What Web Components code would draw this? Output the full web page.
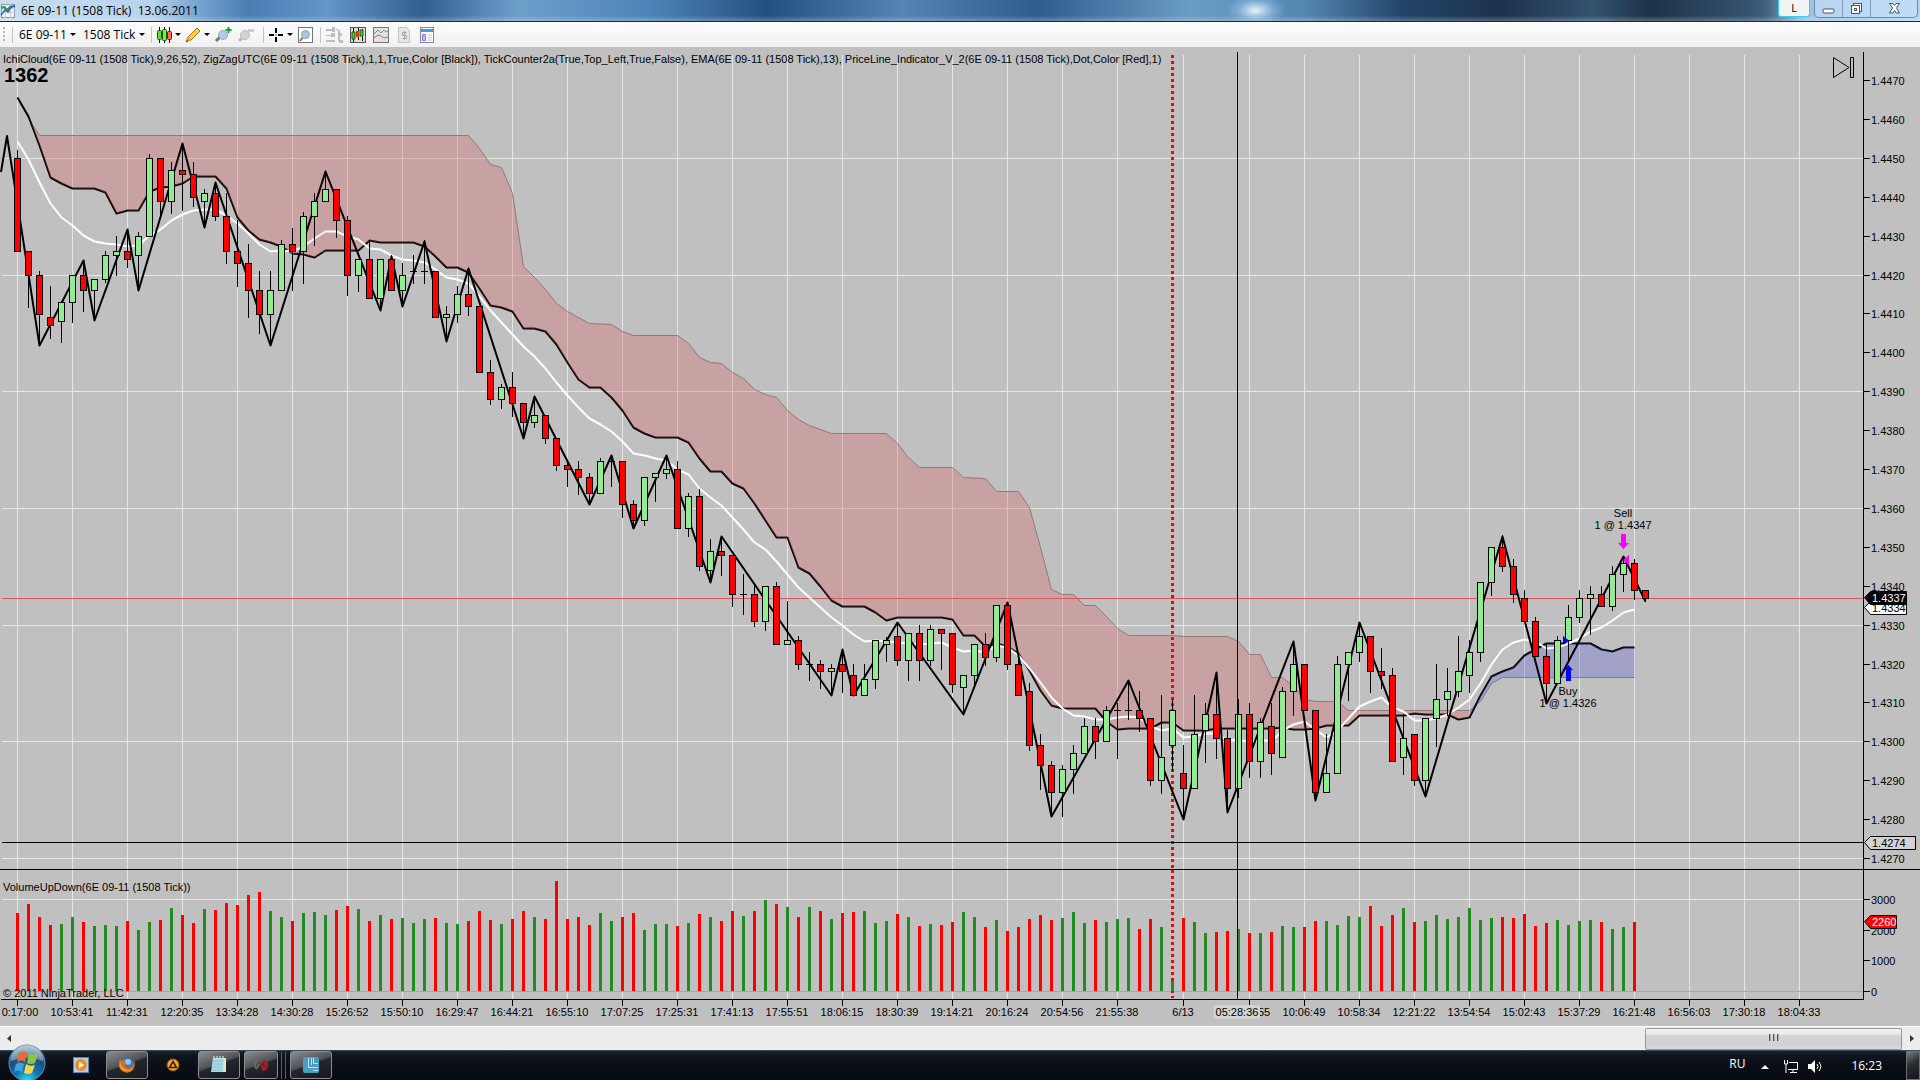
<!DOCTYPE html>
<html lang="en">
<head>
<meta charset="utf-8">
<title>6E 09-11 (1508 Tick) 13.06.2011</title>
<style>
    html {
        height: 100%;
    }

    body {
        margin: 0;
        min-height: 100%;
        background: #c0c0c0;
        font-family: "Open Sans", "Noto Sans", sans-serif;
        font-size: 12px;
        display: flex;
        flex-direction: column;
    }

    main {
        flex: 1;
    }
</style>
</head>
<body>
    <title-bar>6E 09-11 (1508 Tick)&nbsp; 13.06.2011</title-bar>
    <chart-toolbar></chart-toolbar>
    <main>
        <price-chart></price-chart>
        <volume-chart></volume-chart>
    </main>
    <time-scroll></time-scroll>
    <task-bar>
        <span slot="lang">RU</span>
        <span slot="clock">16:23</span>
    </task-bar>

<script>
// One bar per item: colour, high, body top, body bottom, low
const BARS = `
r 150 158 251 251|r 251 251 275 307|r 271 275 314 345|r 286 317 325 338|g 302 302 321 342
g 275 275 302 322|r 260 275 290 311|g 279 279 290 320|g 251 255 279 282|g 236 251 255 275
r 229 251 259 267|g 232 236 255 290|g 154 158 236 236|r 158 158 201 215|g 162 170 201 213
r 143 170 174 210|r 162 174 197 206|g 189 193 201 227|r 182 193 216 220|r 193 216 251 263
r 220 251 263 286|r 244 263 290 317|r 271 290 314 333|g 271 290 314 345|g 240 244 290 290
r 228 244 251 290|g 212 216 251 283|g 193 201 216 245|g 171 189 201 201|r 189 189 220 237
r 216 220 275 295|g 259 259 275 291|r 240 259 298 298|g 259 259 298 310|r 255 259 290 290
g 263 275 290 306|g 255 271 271 283|g 240 271 271 283|r 271 271 317 317|g 306 314 317 341
g 286 294 314 322|r 268 294 306 315|r 306 306 372 372|r 360 372 399 404|g 384 387 399 408
r 372 387 403 416|r 403 403 422 438|g 396 415 422 427|r 415 415 438 443|r 438 438 465 470
r 461 465 469 486|r 461 469 477 494|r 473 477 493 504|g 458 461 493 493|g 455 461 461 486
r 461 461 504 517|r 500 504 520 528|g 477 477 520 525|g 473 473 477 501|g 455 469 473 478
r 461 469 528 528|g 493 496 528 536|r 489 496 566 570|g 539 551 570 582|r 536 551 555 575
r 555 555 594 606|g 574 594 594 614|r 583 594 621 626|g 586 586 621 630|r 582 586 644 644
g 601 640 644 644|r 636 640 664 669|g 652 664 664 680|r 660 664 671 688|g 664 668 671 695
r 649 664 671 692|r 664 675 695 695|g 664 679 695 695|g 640 640 679 688|g 637 640 644 661
r 622 636 660 665|g 633 633 660 680|r 625 633 660 680|g 625 629 660 665|r 629 629 633 669
r 633 633 684 692|g 675 675 687 714|g 644 644 675 685|r 633 644 657 665|g 605 605 657 661
r 602 605 664 669|r 653 664 695 695|r 683 691 745 750|r 734 745 765 789|r 761 765 792 816
g 765 769 792 816|g 745 753 769 793|g 718 726 753 753|r 718 726 741 758|g 706 710 741 741
g 703 710 710 758|g 680 710 710 719|r 691 710 718 731|r 718 718 780 785|g 695 757 780 793
g 699 710 745 770|r 745 773 788 819|g 695 734 788 788|g 703 714 730 762|r 672 714 738 758
r 730 738 788 812|g 699 714 788 797|r 703 714 761 777|g 718 722 761 777|r 703 726 753 774
g 687 691 757 757|g 641 664 691 715|r 664 664 710 710|r 710 710 792 800|g 734 773 792 792
g 656 664 773 773|g 652 652 664 700|g 622 636 652 661|r 636 636 671 692|r 648 671 675 688
r 668 675 761 761|g 714 738 757 774|r 734 734 780 785|g 718 718 780 796|g 664 699 718 746
g 668 691 699 715|g 636 671 691 696|g 640 652 675 692|g 582 582 652 661|g 547 547 582 595
r 535 547 566 571|r 559 566 594 602|r 590 598 621 621|r 617 621 656 656|r 644 656 683 702
g 636 640 683 683|g 605 617 640 660|g 590 598 617 622|g 586 594 598 634|r 586 594 606 606
g 566 574 606 610|g 556 563 574 591|r 559 563 590 599|r 590 590 598 601`
    .trim().split(/[|\n]/).map(line => {
        const [color, ...v] = line.split(' ');
        const [high, top, bottom, low] = v.map(Number);
        return { color, high, top, bottom, low };
    });

const VOLUMES = [
    78, 87, 74, 66, 67, 74, 69, 65, 66, 65, 70, 61, 69, 71, 83, 76, 68, 82, 81, 88,
    86, 96, 99, 80, 74, 70, 78, 79, 76, 81, 85, 82, 70, 76, 72, 73, 68, 72, 73, 68,
    67, 70, 80, 71, 67, 72, 80, 74, 72, 110, 72, 74, 66, 78, 70, 74, 78, 61, 67, 67,
    65, 68, 77, 74, 70, 80, 75, 80, 91, 87, 84, 74, 84, 80, 72, 78, 79, 80, 68, 70,
    77, 74, 65, 67, 66, 69, 79, 74, 64, 71, 60, 64, 72, 76, 71, 73, 79, 68, 71, 69,
    72, 73, 62, 72, 64, 10, 73, 69, 58, 59, 60, 62, 58, 58, 59, 65, 64, 64, 70, 70,
    66, 75, 74, 85, 65, 76, 83, 69, 70, 76, 72, 74, 83, 71, 73, 74, 73, 77, 65, 68,
    71, 66, 70, 71, 69, 62, 64, 69
];

// EMA(13)
const EMA = [
    141, 159, 182, 203, 217, 225, 235, 241, 243, 244, 246, 245, 235, 229, 220, 214, 210, 209, 209, 215,
    223, 233, 244, 251, 250, 251, 246, 238, 231, 231, 236, 239, 248, 249, 255, 259, 260, 262, 269, 277,
    279, 283, 296, 310, 322, 334, 346, 356, 368, 382, 395, 407, 418, 424, 431, 441, 453, 455, 458, 460,
    469, 474, 488, 497, 505, 517, 529, 542, 549, 561, 574, 587, 597, 607, 617, 625, 634, 641, 640, 641,
    642, 643, 644, 643, 642, 647, 651, 650, 652, 645, 647, 655, 668, 682, 697, 708, 715, 716, 719, 719,
    717, 716, 717, 726, 730, 728, 737, 736, 733, 733, 740, 739, 742, 739, 741, 730, 724, 721, 729, 737,
    730, 718, 706, 701, 697, 707, 711, 720, 720, 718, 714, 707, 699, 683, 664, 649, 642, 639, 641, 648,
    647, 643, 638, 631, 627, 620, 612, 609
];

// Ichimoku cloud edges
const SPAN_A = [
    97, 116, 145, 177, 183, 188, 188, 188, 192, 213, 210, 210, 191, 187, 186, 183, 176, 176, 176, 188,
    217, 230, 239, 242, 246, 253, 254, 257, 250, 250, 250, 250, 240, 242, 242, 242, 242, 246, 256, 267,
    267, 272, 288, 305, 307, 311, 328, 328, 331, 344, 362, 379, 387, 387, 397, 410, 427, 433, 437, 437,
    437, 442, 458, 471, 471, 483, 488, 503, 520, 537, 537, 567, 573, 586, 600, 606, 606, 606, 612, 620,
    617, 617, 617, 617, 617, 619, 635, 635, 646, 643, 646, 653, 670, 690, 705, 708, 708, 708, 708, 721,
    729, 728, 728, 728, 722, 722, 730, 730, 730, 728, 728, 728, 728, 728, 728, 727, 729, 729, 728, 725,
    725, 725, 715, 715, 715, 715, 715, 713, 714, 714, 714, 719, 717, 695, 676, 671, 667, 655, 649, 643,
    643, 643, 643, 643, 649, 651, 647, 647
];

// The slower edge stays flat for long runs: [bar, y]
const SPAN_B = [
    [0, 97], [1, 118], [2, 135], [41, 135], [42, 148], [43, 164], [44, 167], [45, 193], [46, 266], [47, 277],
    [48, 289], [49, 303], [50, 311], [51, 317], [52, 323], [54, 324], [55, 331], [56, 335], [60, 335],
    [61, 343], [62, 357], [63, 362], [64, 363], [65, 372], [66, 378], [67, 389], [68, 394], [69, 397],
    [70, 410], [71, 419], [72, 425], [73, 429], [74, 433], [79, 433], [80, 443], [81, 457], [82, 467],
    [85, 467], [86, 477], [88, 478], [89, 491], [91, 491], [92, 507], [93, 547], [94, 589], [95, 594],
    [96, 594], [97, 605], [98, 605], [99, 616], [100, 628], [101, 635], [105, 635], [106, 636], [110, 636],
    [111, 641], [112, 654], [113, 654], [114, 677], [115, 677], [116, 686], [117, 699], [118, 701],
    [120, 701], [121, 710], [132, 710], [133, 701], [134, 683], [135, 677], [147, 677]
];

const ZIGZAG = [
    [2, 345], [6, 260], [7, 320], [10, 229], [11, 290], [15, 143], [17, 227], [18, 182], [23, 345],
    [28, 171], [33, 310], [34, 256], [35, 306], [37, 241], [39, 341], [41, 268], [46, 438], [47, 396],
    [52, 504], [54, 455], [56, 528], [59, 455], [63, 582], [64, 536], [74, 695], [75, 649], [76, 695],
    [80, 622], [86, 714], [90, 602], [94, 816], [101, 680], [106, 819], [109, 672], [110, 812],
    [116, 641], [118, 800], [122, 622], [128, 796], [135, 536], [139, 703], [146, 556], [148, 601]
];

// [bar, label]
const TIMES = [
    [0, '0:17:00'], [5, '10:53:41'], [10, '11:42:31'], [15, '12:20:35'], [20, '13:34:28'],
    [25, '14:30:28'], [30, '15:26:52'], [35, '15:50:10'], [40, '16:29:47'], [45, '16:44:21'],
    [50, '16:55:10'], [55, '17:07:25'], [60, '17:25:31'], [65, '17:41:13'], [70, '17:55:51'],
    [75, '18:06:15'], [80, '18:30:39'], [85, '19:14:21'], [90, '20:16:24'], [95, '20:54:56'],
    [100, '21:55:38'], [106, '6/13'], [112, ''], [117, '10:06:49'], [122, '10:58:34'],
    [127, '12:21:22'], [132, '13:54:54'], [137, '15:02:43'], [142, '15:37:29'], [147, '16:21:48'],
    [152, '16:56:03'], [157, '17:30:18'], [162, '18:04:33']
];

const AXIS_X = 1863;
const CURSOR_X = 1237;
const SESSION_BAR = 105;

const barX = i => 17.5 + i * 11;
const path = points => points.map(([i, y]) => `${barX(i)},${y + 0.5}`).join(' ');
const indexed = (list, from = 0, to = list.length - 1) =>
    list.map((y, i) => [i, y]).filter(([i]) => i >= from && i <= to);
const between = (points, from, to) => points.filter(([i]) => i >= from && i <= to);

const verticalGrid = (y1, y2) => TIMES
    .map(([i]) => `<line class="grid" x1="${barX(i)}" x2="${barX(i)}" y1="${y1}" y2="${y2}"/>`)
    .join('');

const tag = (y, right, fill, stroke, color, text) => `
    <polygon points="1864.5,${y} 1870.5,${y - 6} ${right},${y - 6} ${right},${y + 7} 1870.5,${y + 7}" fill="${fill}" stroke="${stroke}"/>
    <text x="1872" y="${y + 4}" fill="${color}">${text}</text>`;

const CHART_STYLE = `
    :host {
        display: block;
        background: #c0c0c0;
        color: #000;
    }

    svg {
        display: block;
        width: 100%;
        height: auto;
    }

    text {
        font-family: "Liberation Sans", Arial, sans-serif;
        font-size: 11px;
        fill: #000;
    }

    text[fill="white"] {
        fill: #fff;
    }

    .grid {
        stroke: #e6e6e6;
    }

    .axis {
        stroke: #000;
    }

    .session {
        stroke: #f00;
        stroke-width: 3;
        stroke-dasharray: 3 3;
    }

    .mid {
        text-anchor: middle;
    }
`;

class TitleBar extends HTMLElement {
    constructor() {
        super();
        this.attachShadow({ mode: 'open' });
    }

    connectedCallback() {
        this.shadowRoot.innerHTML = `
        <style>
            :host {
                display: flex;
                align-items: center;
                box-sizing: border-box;
                height: 22px;
                padding-right: 2px;
                border-bottom: 1px solid #1c2836;
                background:
                    linear-gradient(transparent 75%, rgba(255, 255, 255, 0.25)),
                    radial-gradient(30px 16px at 65.4% 50%, #e4f2fb, rgba(150, 195, 230, 0.5) 60%, transparent),
                    linear-gradient(90deg, #c9def0, #b6d3ee 8%, #7ea9d2 10%, #4a7db3 13%, #6496c8 17%, #335f8e 22%, #6d9fcb 27%,
                        #4c83b6 34%, #24507f 40%, #5485b4 47%, #2e5d8d 54%, #6a9dc6 62%, #5486b2 68%, #23456a 73%, #1c324d 78%,
                        #34526f 83%, #1d3248 86%, #35536f 91%, #42617f 92%, #9cc0e4 94%, #b4d6f2);
            }

            svg {
                display: block;
            }

            .name {
                flex: 1;
                margin-left: 5px;
                white-space: pre;
            }

            .lang {
                align-self: flex-start;
                box-sizing: border-box;
                width: 32px;
                height: 17px;
                margin-right: 4px;
                border: 1px solid #35d0f5;
                border-top: 0;
                border-radius: 0 0 3px 3px;
                background: #f1f3f5;
                font-size: 11px;
                line-height: 16px;
                text-align: center;
            }

            .buttons {
                align-self: flex-start;
                display: flex;
                box-sizing: border-box;
                height: 18px;
                border: 1px solid #6d8aaa;
                border-top: 0;
                border-radius: 0 0 5px 5px;
                background: rgba(200, 225, 250, 0.6);
            }

            button {
                display: flex;
                align-items: center;
                justify-content: center;
                width: 28px;
                padding: 0;
                border: 0;
                border-right: 1px solid #7f9cbb;
                background: none;
            }

            button:last-child {
                width: 46px;
                border-right: 0;
            }
        </style>
        <svg width="16" height="16" viewBox="0 0 16 16">
            <rect x="1.5" y="1.5" width="13" height="13" fill="#f4f6fb" stroke="#8d95a8"/>
            <path d="M1 5.5h14M1 9.5h14M5.5 1v14M10.5 1v14" stroke="#c5cbe0"/>
            <path d="M1 5l3-1 3 3 3-3 5-1" fill="none" stroke="#2f9e3a" stroke-width="2"/>
            <path d="M1 12l4-5 3 2 3-5 4-1" fill="none" stroke="#2c5fc0" stroke-width="1.500"/>
        </svg>
        <span class="name"><slot></slot></span>
        <span class="lang">L</span>
        <div class="buttons">
            <button aria-label="Minimize"><svg width="13" height="13"><rect x="1" y="7" width="11" height="4" rx="1" fill="#fff" stroke="#4a5568"/></svg></button>
            <button aria-label="Restore"><svg width="13" height="13" fill="#fff" stroke="#4a5568">
                <rect x="3.500" y="1.500" width="8" height="8"/><rect x="1.500" y="3.500" width="8" height="8"/><rect x="4.500" y="6.500" width="2" height="2"/></svg></button>
            <button aria-label="Close"><svg width="13" height="13">
                <path d="M1.500 1.500h3.500l1.500 2 1.500-2h3.500l-3 4.500 3 5h-3.500l-1.500-2.500-1.500 2.500h-3.500l3-5z" fill="#fff" stroke="#4a5568"/></svg></button>
        </div>
        `;
    }
}

class ChartToolbar extends HTMLElement {
    constructor() {
        super();
        this.attachShadow({ mode: 'open' });
    }

    connectedCallback() {
        this.shadowRoot.innerHTML = `
        <style>
            :host {
                display: flex;
                align-items: center;
                height: 25px;
                padding-left: 3px;
                background: linear-gradient(#fdfdfd, #f0f0f0);
            }

            .handle {
                width: 2px;
                height: 16px;
                background: repeating-linear-gradient(#b5b5b5 0 2px, transparent 2px 4px);
            }

            .line {
                width: 1px;
                height: 16px;
                background: #c4c4c4;
            }

            .handle + .line {
                margin: 0 6px 0 7px;
            }

            label {
                display: flex;
                align-items: center;
            }

            select {
                appearance: none;
                box-sizing: border-box;
                padding: 0;
                border: 0;
                background: none;
                color: #000;
                font: inherit;
            }

            .symbol select {
                width: 48px;
            }

            .period select {
                width: 53px;
            }

            label::after,
            .more::after {
                content: "";
                margin-left: 3px;
                border: 3px solid transparent;
                border-top-color: #000;
                border-bottom: 0;
            }

            .period {
                margin: 0 6px 0 7px;
            }

            button {
                display: flex;
                align-items: center;
                padding: 0;
                border: 0;
                background: none;
            }

            .group {
                display: flex;
                align-items: center;
                gap: 4px;
                margin: 0 7px 0 4px;
            }

            .wide {
                gap: 7px;
                margin-left: 5px;
            }

            svg {
                display: block;
            }
        </style>
        <div class="handle"></div>
        <div class="line"></div>
        <label class="symbol"><select aria-label="Instrument"><option>6E 09-11</option></select></label>
        <label class="period"><select aria-label="Period"><option>1508 Tick</option></select></label>
        <div class="line"></div>
        <div class="group">
            <button class="more" aria-label="Chart style"><svg width="16" height="16">
                <path d="M3.500 0v16M8.500 0v16M13.500 0v16" stroke="#000"/>
                <rect x="1.500" y="3.500" width="4" height="9" rx="1" fill="#5fe02e" stroke="#16570a"/>
                <rect x="6.500" y="2.500" width="4" height="11" rx="1" fill="#7bea4a" stroke="#16570a"/>
                <rect x="11.500" y="4.500" width="4" height="8" rx="1" fill="#ff6a55" stroke="#7c120a"/></svg></button>
            <button class="more" aria-label="Draw"><svg width="16" height="16">
                <path d="M1 15l2-5 9-9 3 3-9 9z" fill="#f7d326" stroke="#a5772c"/>
                <path d="M1 15l2-5 3 3z" fill="#d9a35f"/><path d="M1 15l1-2 1 1z" fill="#222"/></svg></button>
            <button aria-label="Zoom in"><svg width="19" height="16">
                <path d="M2 14l5-5" stroke="#777" stroke-width="3"/><circle cx="9" cy="8" r="4.500" fill="#a9cdea" stroke="#9aa7b4"/>
                <path d="M14.500 0v6M11.500 3h6" stroke="#12a535" stroke-width="2"/></svg></button>
            <button aria-label="Zoom out"><svg width="19" height="16">
                <path d="M2 14l5-5" stroke="#bbb" stroke-width="3"/><circle cx="8" cy="8" r="4.500" fill="#d2d2d2" stroke="#bcbcbc"/>
                <path d="M11 3.500h6" stroke="#bbb" stroke-width="2"/></svg></button>
        </div>
        <div class="line"></div>
        <div class="group">
            <button class="more" aria-label="Crosshair"><svg width="16" height="16">
                <path d="M8 1v5M8 10v5M1 8h5M10 8h5" stroke="#000" stroke-width="2"/><path d="M7.500 7.500h1v1h-1z"/></svg></button>
            <button aria-label="Zoom frame"><svg width="16" height="16">
                <rect x="1.500" y=".5" width="14" height="15" fill="#fff" stroke="#777"/>
                <path d="M3 14l3-4" stroke="#777" stroke-width="2"/><circle cx="8.500" cy="7.500" r="4" fill="#a0c8e8" stroke="#8fa3b5"/></svg></button>
        </div>
        <div class="line"></div>
        <div class="group wide">
            <button aria-label="Trader"><svg width="17" height="16" fill="#bdbdbd">
                <path d="M0 2h6v2H0zM6 0h3v5H6zM0 8h6v1H0zM5 6h4v4H5zM0 13h9v2H0zM10 2h2v1h-2zM12 3h2v11h-2zM14 6h2v3h-2zM13 13h4v3h-4z"/></svg></button>
            <button aria-label="Data box"><svg width="16" height="16">
                <rect x=".5" y=".5" width="15" height="15" fill="#ddd" stroke="#555"/>
                <path d="M3.500 1v14M8.500 1v12M12.500 2v12" stroke="#111"/>
                <path d="M2 5h3v7H2zM10 3h3v6h-3z" fill="#4bd01f" stroke="#145c08"/><path d="M6 4h3v6H6z" fill="#e03423"/></svg></button>
            <button aria-label="Indicators"><svg width="16" height="16">
                <rect x=".5" y=".5" width="15" height="15" fill="#e2e2e2" stroke="#777"/>
                <path d="M1 7l4-4 3 3 3-3 2 2 2-1" fill="none" stroke="#3fae6a"/>
                <path d="M1 11l4-3 3 1 3 2 4-1" fill="none" stroke="#e2564c"/></svg></button>
            <button aria-label="Strategies"><svg width="16" height="16">
                <path d="M2.500.5h8l3 3v12h-11z" fill="#e6e6e6" stroke="#c3c3c3"/>
                <path d="M10.500 5.500h-4v3h4v3h-4M8.500 4v9" fill="none" stroke="#a6a6a6"/></svg></button>
            <button aria-label="Properties"><svg width="16" height="16">
                <rect x="1.500" y=".5" width="13" height="15" fill="#fff" stroke="#7a87a8"/>
                <path d="M2 2h12v3H2z" fill="#3f9be0"/><path d="M3.500 7.500h3v6h-3z" fill="#cdbbff" stroke="#8f6df0"/>
                <path d="M9 8h4M9 10.500h4M9 13h4" stroke="#b9c4d6"/></svg></button>
        </div>
        `;
    }
}

class PriceChart extends HTMLElement {
    constructor() {
        super();
        this.attachShadow({ mode: 'open' });
    }

    candle({ color, high, top, bottom, low }, i) {
        const x = barX(i);
        const wick = `<line class="axis" x1="${x}" x2="${x}" y1="${high}" y2="${low + 1}"/>`;
        if (top === bottom) {
            return `${wick}<line class="axis" x1="${x - 3.5}" x2="${x + 3.5}" y1="${top + 0.5}" y2="${top + 0.5}"/>`;
        }
        return `${wick}<rect class="${color}" x="${x - 3}" y="${top + 0.5}" width="6" height="${bottom - top}"/>`;
    }

    cloud(from, to, fill) {
        const upper = between(SPAN_B, from, to);
        const lower = indexed(SPAN_A, from, to).reverse();
        return `<polygon points="${path(upper)} ${path(lower)}" fill="${fill}" fill-opacity="0.3"/>`;
    }

    axis() {
        let out = '';
        for (let n = 0; n <= 20; n++) {
            const y = Math.round(80 + n * 38.9);
            out += `<line class="axis" x1="${AXIS_X}" x2="1870" y1="${y + 0.5}" y2="${y + 0.5}"/>
                <text x="1871" y="${y + 5}">${(1.447 - n * 0.001).toFixed(4)}</text>`;
        }
        return out;
    }

    connectedCallback() {
        const rows = [158, 275, 391, 508, 625, 741, 858];
        this.shadowRoot.innerHTML = `
        <style>
            ${CHART_STYLE}
            .r, .g {
                fill: #f00;
                stroke: #000;
            }

            .g {
                fill: #90ee90;
            }

            polyline {
                fill: none;
                stroke: #000;
                stroke-width: 2;
                stroke-linejoin: round;
            }

            .ema {
                stroke: #fff;
            }

            .span-b {
                stroke: #808080;
                stroke-width: 1;
            }

            .count {
                font-size: 20px;
                font-weight: bold;
            }
        </style>
        <svg viewBox="0 47 1920 823">
            ${verticalGrid(55, 869)}
            ${rows.map(y => `<line class="grid" x1="2" x2="${AXIS_X}" y1="${y + 0.5}" y2="${y + 0.5}"/>`).join('')}
            <line x1="2" x2="${AXIS_X}" y1="598.5" y2="598.5" stroke="#e25555"/>
            <polyline class="span-b" points="${path(SPAN_B)}"/>
            <polyline points="${path(indexed(SPAN_A))}"/>
            ${this.cloud(1, 132, '#dc5c5c')}
            ${this.cloud(132, 147, '#5c5cdc')}
            <polyline class="ema" points="${path(indexed(EMA))}"/>
            <line class="session" x1="${barX(SESSION_BAR)}" x2="${barX(SESSION_BAR)}" y1="55" y2="869"/>
            <polyline points="1,172 7,136 ${path(ZIGZAG)}"/>
            ${BARS.map(this.candle).join('')}

            <text class="mid" x="1623" y="517">Sell</text>
            <text class="mid" x="1623" y="529">1 @ 1.4347</text>
            <path d="M1621 534h5v9h3l-5.500 6-5.500-6h3z" fill="#f0f"/>
            <path d="M1623 560l6-5v10z" fill="#f0f"/>
            <text class="mid" x="1568" y="695">Buy</text>
            <text class="mid" x="1568" y="707">1 @ 1.4326</text>
            <path d="M1568.500 665l4.500 5h-2v11h-5v-11h-2z" fill="#00f"/>
            <path d="M1563 636l6 4.500-6 4.500z" fill="#00f"/>

            <text x="3" y="63">IchiCloud(6E 09-11 (1508 Tick),9,26,52), ZigZagUTC(6E 09-11 (1508 Tick),1,1,True,Color [Black]), TickCounter2a(True,Top_Left,True,False), EMA(6E 09-11 (1508 Tick),13), PriceLine_Indicator_V_2(6E 09-11 (1508 Tick),Dot,Color [Red],1)</text>
            <text class="count" x="4" y="82">1362</text>
            <path d="M1833.500 57.500v20l15.500-10zM1850.500 57.500h3v20h-3z" fill="none" stroke="#000"/>

            <line class="axis" x1="2" x2="${AXIS_X}" y1="842.500" y2="842.500"/>
            <line class="axis" x1="${CURSOR_X + 0.5}" x2="${CURSOR_X + 0.5}" y1="52" y2="869"/>
            <line class="axis" x1="${AXIS_X + 0.5}" x2="${AXIS_X + 0.5}" y1="52" y2="870"/>
            ${this.axis()}
            ${tag(607.5, 1906.5, '#fff', '#000', 'black', '1.4334')}
            ${tag(597.5, 1906.5, '#000', '#000', 'white', '1.4337')}
            ${tag(842.5, 1915.5, '#d3d3d3', '#000', 'black', '1.4274')}
            <line class="axis" x1="0" x2="1920" y1="869.500" y2="869.500"/>
        </svg>
        `;
    }
}

class VolumeChart extends HTMLElement {
    constructor() {
        super();
        this.attachShadow({ mode: 'open' });
    }

    connectedCallback() {
        const colors = { r: '#f00', g: '#228b22' };
        const bars = VOLUMES.map((height, i) =>
            `<rect x="${barX(i) - 1.5}" y="${991 - height}" width="3" height="${height}" fill="${colors[BARS[i].color]}"/>`);
        const session = barX(SESSION_BAR);
        this.shadowRoot.innerHTML = `
        <style>
            ${CHART_STYLE}
        </style>
        <svg viewBox="0 870 1920 156">
            ${verticalGrid(870, 999)}
            <line class="grid" x1="2" x2="${AXIS_X}" y1="899.500" y2="899.500"/>
            <line x1="2" x2="${AXIS_X}" y1="991.500" y2="991.500" stroke="#a6a6a6"/>
            <line class="session" x1="${session}" x2="${session}" y1="870" y2="998"/>
            ${bars.join('')}
            <line class="axis" x1="${CURSOR_X + 0.5}" x2="${CURSOR_X + 0.5}" y1="870" y2="999"/>
            <text x="3" y="891">VolumeUpDown(6E 09-11 (1508 Tick))</text>
            <text x="3" y="997">© 2011 NinjaTrader, LLC</text>

            <line class="axis" x1="1" x2="${AXIS_X + 1}" y1="999.500" y2="999.500"/>
            <line class="axis" x1="${AXIS_X + 0.5}" x2="${AXIS_X + 0.5}" y1="870" y2="1000"/>
            ${[3000, 2000, 1000, 0].map((v, n) => {
                const y = 899 + Math.round(n * 30.7);
                return `<line class="axis" x1="${AXIS_X}" x2="1870" y1="${y + 0.5}" y2="${y + 0.5}"/>
                    <text x="1871" y="${y + 5}">${v}</text>`;
            }).join('')}
            ${tag(921.5, 1896.5, '#f00', '#000', 'white', '2260')}

            ${TIMES.map(([i, label]) => `
                <line class="axis" x1="${barX(i)}" x2="${barX(i)}" y1="1000" y2="1006"/>
                <text class="mid" x="${Math.max(barX(i) - 0.5, 20)}" y="1016">${label}</text>`).join('')}
            <text x="1258" y="1016">55</text>
            <rect x="1214" y="1005" width="46" height="14" fill="#d3d3d3"/>
            <text class="mid" x="1237" y="1016">05:28:36</text>
        </svg>
        `;
    }
}

class TimeScroll extends HTMLElement {
    constructor() {
        super();
        this.attachShadow({ mode: 'open' });
    }

    connectedCallback() {
        this.shadowRoot.innerHTML = `
        <style>
            :host {
                display: flex;
                align-items: center;
                box-sizing: border-box;
                height: 24px;
                border-top: 1px solid #fff;
                background: #ececec;
            }

            button {
                width: 18px;
                height: 18px;
                padding: 0;
                border: 0;
                background: none;
            }

            .track {
                flex: 1;
                display: flex;
                justify-content: flex-end;
            }

            .thumb {
                display: flex;
                align-items: center;
                justify-content: center;
                gap: 2px;
                box-sizing: border-box;
                width: 257px;
                height: 22px;
                border: 1px solid #979797;
                border-radius: 2px;
                background: linear-gradient(#f3f3f3, #e6e6e6 30%, #d4d5d8 32%, #d0d1d4 80%, #dcdcdc);
            }

            .thumb i {
                width: 1px;
                height: 7px;
                margin-bottom: 3px;
                background: #555;
                border-right: 1px solid #aaa;
            }

            svg {
                display: block;
                margin: auto;
            }
        </style>
        <button aria-label="Scroll left"><svg width="7" height="7"><path d="M5 0v7L1 3.500z" fill="#333"/></svg></button>
        <div class="track" role="scrollbar" aria-label="Time" aria-orientation="horizontal" aria-valuenow="100">
            <div class="thumb"><i></i><i></i><i></i></div>
        </div>
        <button aria-label="Scroll right"><svg width="7" height="7"><path d="M2 0v7l4-3.500z" fill="#333"/></svg></button>
        `;
    }
}

class TaskBar extends HTMLElement {
    constructor() {
        super();
        this.attachShadow({ mode: 'open' });
    }

    connectedCallback() {
        this.shadowRoot.innerHTML = `
        <style>
            :host {
                display: flex;
                align-items: center;
                height: 30px;
                background: linear-gradient(#5f7180, #1a232d 1px, #10161e 5px, #0a0f17 15px, #080b11);
                color: #fff;
            }

            button {
                display: flex;
                align-items: center;
                justify-content: center;
                padding: 0;
                border: 0;
                background: none;
            }

            svg {
                display: block;
            }

            /* the orb sticks out above the bar */
            .start {
                position: relative;
                width: 38px;
                height: 30px;
                margin-left: 8px;
            }

            .start svg {
                position: absolute;
                left: 0;
                bottom: 0;
            }

            .pin {
                width: 16px;
                margin-left: 27px;
            }

            .app {
                box-sizing: border-box;
                width: 42px;
                height: 28px;
                border: 1px solid #8b8f94;
                border-radius: 3px;
                background: linear-gradient(160deg, #8b8e91, #4e5255 45%, #24282c 50%, #15181c);
            }

            .firefox {
                margin-left: 17px;
            }

            .aimp {
                width: 16px;
                margin: 0 17px;
            }

            .ninja {
                width: 34px;
                margin-left: 4px;
            }

            .stack {
                width: 2px;
                height: 27px;
                margin-left: 1px;
                border-right: 1px solid #5a5f64;
            }

            .last {
                margin-left: 4px;
            }

            .tray {
                display: flex;
                align-items: center;
                margin-left: auto;
            }

            .tray svg {
                margin-top: 3px;
            }

            .lang {
                margin: -4px 16px 0 0;
            }

            .net {
                margin: 0 8px 0 14px;
            }

            .clock {
                margin: 0 24px 0 28px;
            }

            .desktop {
                box-sizing: border-box;
                width: 14px;
                height: 29px;
                border: 1px solid #6c7075;
                background: linear-gradient(150deg, #777c80, #2a2e32 45%, #111418);
            }
        </style>
        <button class="start" aria-label="Start"><svg width="38" height="36" viewBox="0 0 38 36">
            <defs>
                <radialGradient id="orb" cx="50%" cy="100%" r="95%">
                    <stop offset="0" stop-color="#35e0ff"/><stop offset=".35" stop-color="#1278b4"/>
                    <stop offset=".7" stop-color="#1b4f7d"/><stop offset="1" stop-color="#8fb0c8"/>
                </radialGradient>
            </defs>
            <circle cx="19" cy="19" r="18" fill="url(#orb)" stroke="#5f93b5"/>
            <path d="M3 17a16 16 0 0 1 32 0q-16-6-32 0z" fill="#fff" opacity=".3"/>
            <path d="M11 9q4-3 8 0l-2 9q-4-3-8 0z" fill="#ee6a2c"/>
            <path d="M21 9q4 3 9 1l-3 9q-4 2-8 0z" fill="#8cc63e"/>
            <path d="M8 20q4-3 8 0l-2 8q-4-3-8 0z" fill="#43a1e0"/>
            <path d="M18 20q4 3 9 1l-3 8q-4 2-8 0z" fill="#fcd344"/>
        </svg></button>
        <button class="pin" aria-label="Media Player"><svg width="16" height="16">
            <rect x=".5" y=".5" width="15" height="15" fill="#a9d3f0" stroke="#4c88b8"/>
            <circle cx="8" cy="8" r="6" fill="#f58a1f"/><path d="M6 4.500v7l5-3.500z" fill="#fff"/></svg></button>
        <button class="app firefox" aria-label="Firefox"><svg width="18" height="18">
            <circle cx="9" cy="9" r="7" fill="#3a7cc7"/><circle cx="10" cy="6" r="3" fill="#8cc6ee"/>
            <path d="M2 3q-3 8 2 12 6 4 11-1 3-5 1-10 0 7-4 8-4 1-6-2l4-1-4-3V3L4 5z" fill="#e8681c"/>
            <path d="M2 6q-1 6 3 8 5 3 10-1-5 2-8 0Q3 11 2 6z" fill="#f9a82e"/></svg></button>
        <button class="aimp" aria-label="AIMP"><svg width="14" height="14">
            <circle cx="7" cy="7" r="6" fill="#f3a32b" stroke="#8e5410"/><path d="M7 3.500l3.500 6h-7z" fill="none" stroke="#332008" stroke-width="1.500"/></svg></button>
        <button class="app" aria-label="Notepad"><svg width="18" height="18">
            <path d="M4 2h12v14H4z" fill="#e9e4c8"/><path d="M3 2h11l-1 14H1z" fill="#a6dbe4"/>
            <path d="M3 5h10M3 8h10M2 11h10M2 14h10" stroke="#8cc3cf"/><path d="M4 0v3M7 0v3M10 0v3M13 0v3" stroke="#e8eef0"/></svg></button>
        <button class="app ninja" aria-label="NinjaTrader"><svg width="16" height="16" fill="none" stroke-width="2">
            <path d="M7 4q-5-1-5 4 0 3 2 4M4 11l4-7" stroke="#66666b"/><path d="M6 4l4 8 3-8M10 4q4 0 4 4 0 4-4 5" stroke="#a5202a"/></svg></button>
        <div class="stack"></div>
        <div class="stack"></div>
        <button class="app last" aria-label="Charts"><svg width="16" height="16">
            <rect width="16" height="16" rx="2" fill="#4d9cc4"/>
            <path d="M5.500 1v9.500H15M10.500 1v5.500H15M8.500 1v7M10 13.500h5" fill="none" stroke="#bfe2f2"/></svg></button>
        <div class="tray">
            <span class="lang"><slot name="lang"></slot></span>
            <svg width="8" height="5"><path d="M0 5l4-4 4 4z" fill="#fff"/></svg>
            <svg class="net" width="16" height="15" fill="none" stroke="#fff">
                <path d="M6 3.500h8.500v7H5M10 11v2.500M7 13.500h7M1.500 1v4h3V1M3 5v9"/></svg>
            <svg width="16" height="15"><path d="M1 5h3l4-4v13l-4-4H1z" fill="#fff"/>
                <path d="M10 5q2 2.500 0 5M12 3q3.500 4.500 0 9" fill="none" stroke="#fff"/></svg>
            <span class="clock"><slot name="clock"></slot></span>
            <button class="desktop" aria-label="Show desktop"></button>
        </div>
        `;
    }
}

customElements.define('title-bar', TitleBar);
customElements.define('chart-toolbar', ChartToolbar);
customElements.define('price-chart', PriceChart);
customElements.define('volume-chart', VolumeChart);
customElements.define('time-scroll', TimeScroll);
customElements.define('task-bar', TaskBar);
</script>
</body>
</html>
